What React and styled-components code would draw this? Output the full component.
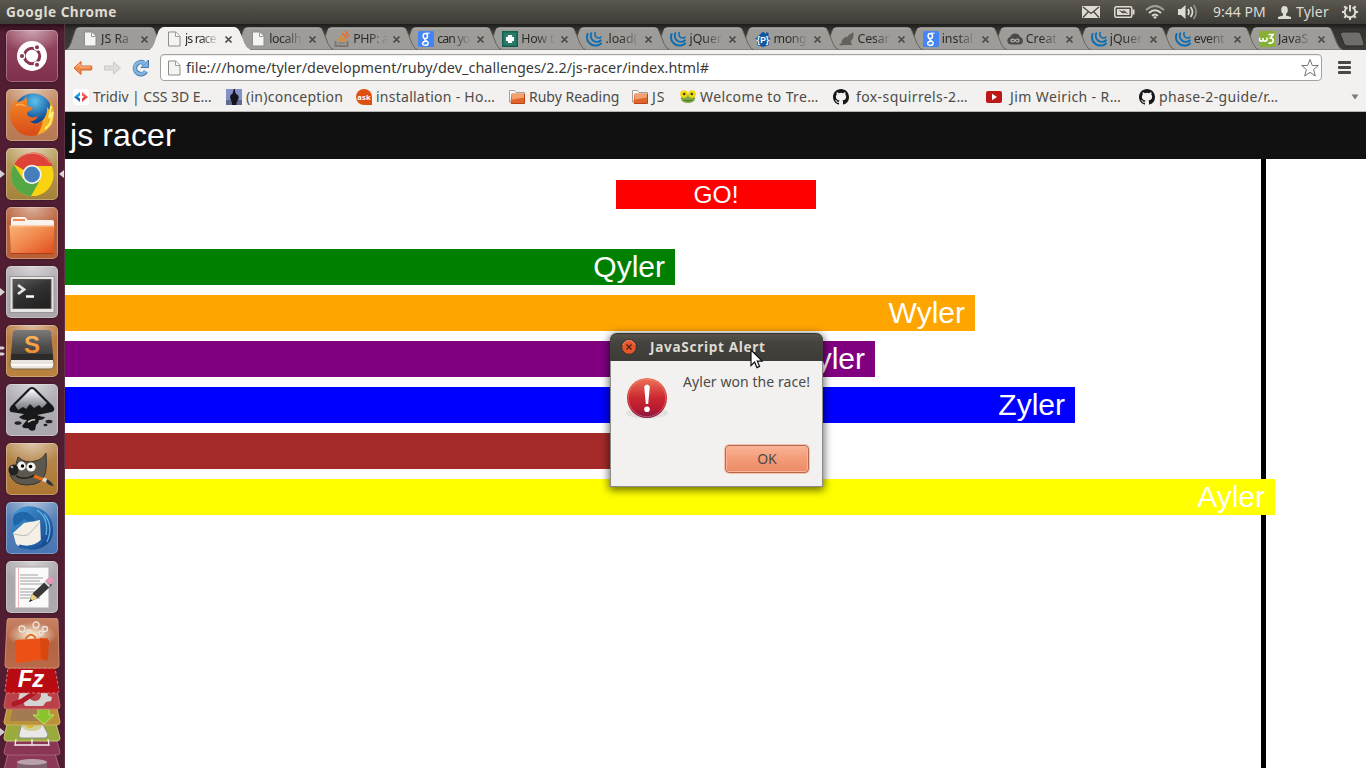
import React from "react";
import styled, { createGlobalStyle } from "styled-components";

const ui = `"Noto Sans", "Open Sans", sans-serif`;
const arial = `"Liberation Sans", Arial, sans-serif`;

const GlobalStyle = createGlobalStyle`
  body { margin: 0; overflow: hidden; background: #fff; }
  * { box-sizing: border-box; }
  svg { display: block; flex: none; }
`;

const Desktop = styled.div`
  position: relative;
  width: 1366px;
  height: 768px;
  overflow: hidden;
  display: flex;
  flex-direction: column;
  font-family: ${ui};
`;

/* ---------- top panel ---------- */
const Panel = styled.header`
  height: 24px;
  flex: none;
  display: flex;
  align-items: center;
  justify-content: space-between;
  padding: 0 8px 0 6px;
  background: linear-gradient(#5b594f 0, #514f47 30%, #3d3c38 100%);
  color: #dfdbd2;
`;
const PanelTitle = styled.span`
  font-size: 13.6px;
  font-weight: 700;
  line-height: 24px;
  letter-spacing: ${(p) => p.$ls || 0}px;
`;
const Indicators = styled.div`
  display: flex;
  align-items: center;
  height: 24px;
`;
const Indicator = styled.div`
  display: flex;
  align-items: center;
  width: ${(p) => p.$w}px;
  font-size: 14px;
  line-height: 24px;
  white-space: nowrap;
  letter-spacing: ${(p) => p.$ls || 0}px;
`;

const Workspace = styled.div`
  flex: 1;
  min-height: 0;
  display: flex;
`;

/* ---------- launcher ---------- */
const Launcher = styled.nav`
  width: 65px;
  flex: none;
  display: flex;
  flex-direction: column;
  background: linear-gradient(#2b0f1b 0, #511d33 8px, #501d32 100%);
  border-right: 1px solid #5c3446;
  padding-top: 6px;
`;
const LauncherRow = styled.div`
  height: 59px;
  flex: none;
  display: grid;
  grid-template-columns: 6px 52px 6px;
  align-items: start;
`;
const Marks = styled.div`
  height: 52px;
  display: flex;
  flex-direction: column;
  justify-content: center;
  align-items: ${(p) => (p.$right ? "flex-end" : "flex-start")};
  gap: 2px;
`;
const Tile = styled.div`
  width: 52px;
  height: 52px;
  border-radius: 5px;
  overflow: hidden;
  background: radial-gradient(ellipse 60% 45% at 50% 0, rgba(255, 255, 255, 0.5), rgba(255, 255, 255, 0) 100%), ${(p) => p.$bg};
  box-shadow: inset 0 0 0 1px rgba(255, 255, 255, 0.28), 0 0 2px rgba(0, 0, 0, 0.5);
`;
const StackArt = styled.svg`
  margin-top: -2px;
`;

/* ---------- browser ---------- */
const Browser = styled.main`
  flex: 1;
  min-width: 0;
  display: flex;
  flex-direction: column;
`;
const TabStrip = styled.div`
  height: 26px;
  flex: none;
  display: flex;
  align-items: flex-end;
  padding-left: 1px;
  background: linear-gradient(#1d1c1a 0, #353430 6px, #3c3b37 100%);
`;
const TabBox = styled.div`
  position: relative;
  z-index: ${(p) => p.$z};
  width: 84.07px;
  flex: none;
  height: 24px;
`;
const TabShape = styled.svg`
  position: absolute;
  left: 0;
  top: 0;
`;
const TabContent = styled.div`
  position: relative;
  display: flex;
  align-items: center;
  height: 24px;
  padding: 2px 0 0 16px;
`;
const TabLabel = styled.span`
  width: 34px;
  margin-left: 3px;
  margin-right: 5px;
  white-space: nowrap;
  font-size: 12.4px;
  letter-spacing: ${(p) => p.$ls || 0}px;
  line-height: 20px;
  color: #2c2a26;
  mask-image: linear-gradient(90deg, #000 45%, rgba(0, 0, 0, 0.1) 95%);
`;
const NewTab = styled.div`
  margin: 0 0 3px 12px;
`;
const Toolbar = styled.div`
  height: 33px;
  flex: none;
  display: flex;
  align-items: center;
  background: #f2f1f0;
  padding: 2px 14px 0 8px;
`;
const NavButtons = styled.div`
  width: 87px;
  display: flex;
  gap: 9px;
`;
const Omnibox = styled.div`
  width: 1162px;
  height: 27px;
  display: flex;
  align-items: center;
  padding: 0 1px 0 5px;
  border: 1px solid #a5a29e;
  border-radius: 4px;
  background: #fff;
  box-shadow: inset 0 1px 1px rgba(0, 0, 0, 0.08);
`;
const Url = styled.span`
  flex: 1;
  margin-left: 4px;
  font-size: 14.4px;
  line-height: 24px;
  letter-spacing: 0.025px;
  color: #3a3936;
  white-space: nowrap;
`;
const MenuButton = styled.div`
  margin-left: 16px;
  width: 13px;
  height: 13px;
  display: flex;
  flex-direction: column;
  justify-content: space-between;
  i { height: 3px; border-radius: 1px; background: #484744; }
`;
const BookmarkBar = styled.div`
  height: 29px;
  flex: none;
  display: flex;
  padding: 0 7px 1px 8px;
  align-items: center;
  background: #f2f1f0;
  border-bottom: 1px solid #b8b6b4;
`;
const Bookmark = styled.div`
  width: ${(p) => p.$w}px;
  flex: none;
  display: flex;
  align-items: center;
  gap: ${(p) => p.$gap || 4}px;
  font-size: 14px;
  letter-spacing: ${(p) => p.$ls || 0}px;
  line-height: 26px;
  color: #4c4b48;
  white-space: nowrap;
`;

/* ---------- page ---------- */
const PageHeader = styled.div`
  height: 47px;
  flex: none;
  padding-left: 5px;
  background: #111;
  color: #fff;
  font: 32px/47px ${arial};
  letter-spacing: 0.1px;
`;
const Track = styled.section`
  width: 1201px;
  flex: 1;
  padding-top: 21px;
  border-right: 5px solid #000;
  font-family: ${arial};
`;
const GoButton = styled.div`
  width: 200px;
  height: 29px;
  margin: 0 0 40px 551px;
  background: red;
  color: #fff;
  text-align: center;
  font-size: 24.5px;
  line-height: 29px;
`;
const Lane = styled.div`
  width: ${(p) => p.$w}px;
  height: 36px;
  margin-bottom: 10px;
  padding-right: 10px;
  position: relative;
  background: ${(p) => p.$c};
  color: #fff;
  text-align: right;
  font-size: 30px;
  line-height: 36px;
`;

/* ---------- dialog ---------- */
const Dialog = styled.div`
  position: absolute;
  z-index: 50;
  left: 610px;
  top: 333px;
  width: 213px;
  height: 154px;
  display: flex;
  flex-direction: column;
  background: #f2f1f0;
  border: 1px solid #8d8c89;
  border-top: 0;
  border-radius: 7px 7px 0 0;
  box-shadow: 0 2px 8px 1px rgba(0, 0, 0, 0.6);
`;
const TitleBar = styled.div`
  height: 28px;
  flex: none;
  display: flex;
  align-items: center;
  margin: 0 -1px;
  padding: 0 0 1px 11px;
  gap: 13px;
  border-radius: 7px 7px 0 0;
  border-top: 1px solid #33322e;
  background: linear-gradient(#55534b 0, #45443f 30%, #3c3b37 100%);
  color: #dfdbd2;
`;
const DialogBody = styled.div`
  display: flex;
  padding: 10px 0 0 14px;
  height: 84px;
`;
const Message = styled.span`
  margin-left: 14px;
  font-size: 14px;
  line-height: 22px;
  letter-spacing: 0.07px;
  color: #4c4b48;
  white-space: nowrap;
`;
const OkButton = styled.button`
  align-self: flex-end;
  width: 84px;
  height: 28px;
  margin: 0 13px 0 0;
  padding: 0;
  border: 1px solid #b5684a;
  border-radius: 4px;
  background: linear-gradient(#fab396 0, #f39b78 50%, #ee8b66 100%);
  box-shadow: 0 0 0 1px #f4c3b0, inset 0 0 0 1px #f8b79d;
  color: #4c4b48;
  font: 14px/26px ${ui};
`;
const Cursor = styled.svg`
  position: absolute;
  z-index: 60;
  left: 750px;
  top: 349px;
`;

/* ---------- small icons ---------- */
const S = ({ children, w = 16, h = w, ...r }) => (
  <svg width={w} height={h} viewBox={`0 0 ${w} ${h}`} {...r}>{children}</svg>
);

const PageIcon = () => (
  <S>
    <path d="M2.500 1h7.200L14 5.300V15H2.500z" fill="#f4f4f3" stroke="#8e8d8a" />
    <path d="M9.500 1.200v4.300h4.300" fill="#fff" stroke="#9b9a97" />
  </S>
);
const StackIcon = () => (
  <S>
    <path d="M1.500 10v5h12v-5" fill="none" stroke="#7b7772" strokeWidth="2" />
    <path d="M4 12h7" stroke="#8b8579" strokeWidth="1.800" />
    <path d="M4 8.700l7 1.300M5 5.600l6.500 2.800" stroke="#e08a28" strokeWidth="1.700" />
    <path d="M8 2l5 5M12 0l2.600 6" stroke="#ee6a20" strokeWidth="1.700" />
  </S>
);
const GoogleIcon = () => (
  <S>
    <rect width="16" height="16" rx="1.500" fill="#4484f3" />
    <g fill="none" stroke="#fff">
      <ellipse cx="7.300" cy="5" rx="2.200" ry="2.600" strokeWidth="1.500" />
      <path d="M8 2.200h3.600" strokeWidth="1.100" />
      <path d="M7.500 7.500q-1.700 1.100 0 2 2.700 1 2.700 2.600Q10 14.300 7.300 14.300 4.500 14.200 4.600 12.200 5 10.300 8 10.200" strokeWidth="1.400" />
    </g>
  </S>
);
const PlusIcon = () => (
  <S>
    <rect width="16" height="16" fill="#14604f" />
    <rect x="1.500" y="1.500" width="13" height="13" fill="#287a69" />
    <path d="M8 4v8M4 8h8" stroke="#fff" strokeWidth="4.200" />
  </S>
);
const JqueryIcon = () => (
  <S>
    <g fill="none" stroke="#0b6eb4" strokeLinecap="round">
      <path d="M1.600 3C-.6 9 4 15.500 11 14.400c1.800-.3 3-1.100 4-2" strokeWidth="2" />
      <path d="M5.300 2.200C3.400 7 7 11.600 12 10.800c1.300-.2 2.200-.8 3-1.500" strokeWidth="1.800" />
      <path d="M9.200 1.500C8 4.600 10.200 7.300 13 7c.8-.1 1.400-.4 2-.9" strokeWidth="1.500" />
    </g>
  </S>
);
const HouseIcon = () => (
  <S>
    <path d="M0 8L8 .5l3 2.600V1.500h2.500v4L16 8l-2 .6V14L8 16l-6-2V8.600z" fill="#12569d" />
    <text x="8" y="12" textAnchor="middle" fontFamily="Liberation Sans" fontWeight="700" fontSize="8.500" fill="#fff">{"{P}"}</text>
  </S>
);
const CatIcon = () => (
  <S>
    <path d="M0 14c0-1 2-1.200 2.500-2C3 8 5.500 6 9 5.600L10 3.500 12 3l2-2 .7 2.600L14 6.500c0 1.500-1 2.500-2 3-.3 1.500.3 3 1.300 4.500H5c-2 .6-4 .6-5 0z" fill="#65625e" />
  </S>
);
const CloudIcon = () => (
  <S>
    <path d="M3.500 13.500a3.800 3.800 0 0 1-.5-7.400 5.500 5.500 0 0 1 10.200-.2 3.900 3.900 0 0 1-.7 7.600z" fill="#4b4a49" />
    <path d="M8 9.500C6.500 7.500 4 7.600 4 9.500s2.500 2 4 0 4-2 4 0-2.500 2-4 0z" fill="none" stroke="#b9b8b5" strokeWidth="1.200" />
  </S>
);
const W3Icon = () => (
  <S>
    <rect width="16" height="16" fill="#86b135" />
    <path d="M.5 6.500v2.500q1.500 2.500 3.500 0V7v2q2 2.500 4 0V6.500" fill="none" stroke="#fff" strokeWidth="1.600" />
    <path d="M9.500 3.500h4.500l-2.500 3.500q3 .2 2.700 2.800-.6 3-4.700 2" fill="none" stroke="#fff" strokeWidth="1.700" />
  </S>
);
const TridivIcon = () => (
  <S>
    <rect width="16" height="16" rx="3" fill="#fff" />
    <path d="M7 3v3.500L5 8H1z" fill="#17a0ee" /><path d="M1 8h4l2 1.500V13z" fill="#1764c0" />
    <path d="M9 3v3.500L11 8h4z" fill="#fb5a4c" /><path d="M15 8h-4L9 9.500V13z" fill="#e23c48" />
  </S>
);
const FigureIcon = () => (
  <S>
    <rect width="16" height="16" fill="#8391c6" />
    <path d="M0 11h16v5H0z" fill="#626a91" />
    <path d="M8 0h1v2.500l1 2.500q3 1 2.700 4L10.500 14v2H6v-2L4 8.500q0-3 2.700-4L7 2.500z" fill="#15131c" />
  </S>
);
const AskIcon = () => (
  <S>
    <circle cx="8" cy="8" r="8" fill="#de4f10" />
    <path d="M9 9h7v7H9z" fill="#de4f10" />
    <text x="8" y="10.500" textAnchor="middle" fontFamily="Noto Sans" fontWeight="700" fontSize="7.500" fill="#fff">ask</text>
  </S>
);
const FolderIcon = () => (
  <S>
    <path d="M.5 13V1.500h5l1.500 2h8.500V13z" fill="#fff" stroke="#a5a09c" />
    <path d="M2.500 4.500h13v9.500h-14z" fill="#df672b" />
    <path d="M3 5h12v3.500l-12 2z" fill="#f2a16f" />
    <path d="M2 14.500h13.500V5" fill="none" stroke="#bd4317" />
  </S>
);
const FrogIcon = () => (
  <S>
    <ellipse cx="8" cy="9.500" rx="7.200" ry="4.500" fill="#7fa943" />
    <path d="M3.500 11q4.500 2 9 0" fill="none" stroke="#4c7128" />
    <circle cx="4" cy="5" r="3.800" fill="#f3d90d" /><circle cx="12" cy="5" r="3.800" fill="#f3d90d" />
    <circle cx="4.200" cy="5" r="1.300" fill="#343e1e" /><circle cx="11.800" cy="5" r="1.300" fill="#343e1e" />
  </S>
);
const GithubIcon = () => (
  <S>
    <path fill="#171717" d="M8 0C3.580 0 0 3.580 0 8c0 3.540 2.290 6.530 5.470 7.590.4.070.55-.17.55-.38 0-.19-.01-.82-.01-1.490-2.010.37-2.530-.49-2.690-.94-.09-.23-.48-.94-.82-1.130-.28-.15-.68-.52-.01-.53.63-.01 1.080.58 1.230.82.72 1.210 1.870.87 2.330.66.07-.52.28-.87.51-1.070-1.780-.2-3.640-.89-3.640-3.950 0-.87.31-1.590.82-2.150-.08-.2-.36-1.020.08-2.120 0 0 .67-.21 2.200.82a7.600 7.600 0 0 1 4 0c1.530-1.040 2.200-.82 2.200-.82.44 1.100.16 1.920.08 2.120.51.56.82 1.270.82 2.150 0 3.070-1.870 3.750-3.650 3.950.29.25.54.73.54 1.480 0 1.070-.01 1.930-.01 2.200 0 .21.15.46.55.38A8.010 8.010 0 0 0 16 8c0-4.420-3.580-8-8-8z" />
  </S>
);
const TubeIcon = () => (
  <S>
    <rect y="2" width="16" height="12" rx="2" fill="#bd1717" />
    <path d="M6 4.800v6.400L11 8z" fill="#fff" />
  </S>
);

const BackIcon = ({ off }) => (
  <S w={20}>
    <path
      d={off ? "M18.500 10l-7-6v4h-9v4h9v4z" : "M1 10l7-6.500V8h10q.8 0 .8 1v2q0 1-.8 1H8v4.500z"}
      fill={off ? "#deddda" : "#f08a45"}
      stroke={off ? "#cbc9c6" : "#ce6429"}
      strokeLinejoin="round"
    />
    {!off && <path d="M2.800 9.800l4.200-4V9h10" fill="none" stroke="#fbc08f" />}
  </S>
);
const ReloadIcon = () => (
  <S w={20}>
    <path d="M13 5A6 6 0 1 0 15 13.500" fill="none" stroke="#4079ad" strokeWidth="4.600" />
    <path d="M17.500 2v7.500H10z" fill="#7fb1de" stroke="#4079ad" strokeLinejoin="round" />
    <path d="M13.200 5.200A6 6 0 1 0 14.800 13.200" fill="none" stroke="#83b5e2" strokeWidth="2.900" />
  </S>
);

/* ---------- launcher drawings ---------- */
const L = ({ children }) => <svg width="52" height="52" viewBox="0 0 52 52">{children}</svg>;

const Dash = () => (
  <L>
    <circle cx="26" cy="26" r="15" fill="#fff" />
    <circle cx="26" cy="26" r="7.700" fill="none" stroke="#893850" strokeWidth="3" />
    <g stroke="#fff" strokeWidth="1.300">
      <circle cx="16" cy="26" r="2.700" fill="#893850" />
      <circle cx="31" cy="17.300" r="2.700" fill="#893850" />
      <circle cx="31" cy="34.700" r="2.700" fill="#893850" />
    </g>
  </L>
);
const Firefox = () => (
  <L>
    <defs>
      <radialGradient id="ffb" cx=".55" cy=".2"><stop offset="0" stopColor="#5cc3ee" /><stop offset="1" stopColor="#104a93" /></radialGradient>
      <linearGradient id="ffo" x2="0" y2="1"><stop offset="0" stopColor="#f58b27" /><stop offset="1" stopColor="#d84a17" /></linearGradient>
    </defs>
    <circle cx="27" cy="24" r="19.500" fill="url(#ffb)" />
    <path d="M44 12c6 9 6 22-3 29-8 7-20 7-28 1l6-8c8 3 16 1 20-6 2-4 2-6 2-10l4 5z" fill="#f6b021" />
    <path d="M45 17l-2 12 4-6-3 12-5 5" fill="none" stroke="#fff27a" strokeWidth="1.800" />
    <path d="M8 12c1-1 2 0 3 1 4-1 7-1 9-5 2 4 0 7 2 9l5 2c-1 3-5 3-6 5 0 4 6 6 10 3 1 2-3 6-7 5 4 4 9 3 13-1-1 6-2 9-6 15-6 2-16 1-21-6C4 34 3 26 5 20z" fill="url(#ffo)" />
    <path d="M10 16q5-2 9 1" fill="none" stroke="#fbab52" strokeWidth="1.500" />
  </L>
);
const Chrome = () => (
  <L>
    <circle cx="26" cy="27" r="21" fill="#fbd311" />
    <path d="M26 27L8 16.200A21 21 0 0 1 46.500 18H26z" fill="#dd4437" />
    <path d="M7.800 16.500A21 21 0 0 0 25 48l9.500-16L17 31z" fill="#55a746" />
    <path d="M26 18h19.500a21 21 0 0 1-20 30L34 32z" fill="#fbd210" />
    <circle cx="26" cy="26.500" r="9.700" fill="#f5f3ed" />
    <circle cx="26" cy="26.500" r="7.900" fill="#447fbb" />
    <path d="M8 16a21 21 0 0 1 36-1" fill="none" stroke="#ef9285" />
  </L>
);
const Files = () => (
  <L>
    <defs><linearGradient id="fo" x2="1" y2="1"><stop offset="0" stopColor="#f9b377" /><stop offset=".45" stopColor="#f18a4e" /><stop offset="1" stopColor="#e04b1c" /></linearGradient></defs>
    <path d="M5 21V12q0-2 2-2h12l3 3h24q2 0 2 2v6z" fill="#f8f3ee" />
    <path d="M7 13h12" stroke="#f08850" strokeWidth="2" />
    <path d="M3.500 18.500h45L47 47H5z" fill="url(#fo)" />
    <path d="M4 19h44" stroke="#ffd0a1" />
    <path d="M5 46.500h42" stroke="#b73a17" />
  </L>
);
const Terminal = () => (
  <L>
    <defs><linearGradient id="te" x2=".6" y2="1"><stop offset="0" stopColor="#5d5c5b" /><stop offset=".5" stopColor="#333232" /><stop offset="1" stopColor="#242322" /></linearGradient></defs>
    <rect x="4" y="10.500" width="44" height="36" fill="#e7e6e4" stroke="#989695" />
    <rect x="7" y="13.500" width="38" height="29" fill="url(#te)" stroke="#555" />
    <path d="M12 19l6 4.500-6 4.500" fill="none" stroke="#e4e4e3" strokeWidth="2.800" />
    <path d="M20 30.500h8" stroke="#fff" strokeWidth="2.400" />
  </L>
);
const Sublime = () => (
  <L>
    <defs>
      <linearGradient id="sub" x2="0" y2="1"><stop offset="0" stopColor="#7b7a79" /><stop offset=".6" stopColor="#4b4a49" /><stop offset="1" stopColor="#3a3938" /></linearGradient>
      <linearGradient id="subs" x2="0" y2="1"><stop offset="0" stopColor="#ffbf6b" /><stop offset="1" stopColor="#ef8420" /></linearGradient>
    </defs>
    <path d="M8 9h36l4 30q0 5-4 5H8q-4 0-4-5z" fill="#e9e5de" stroke="#79623f" />
    <path d="M10 5h32q3 0 3.300 3L47 34H5L6.700 8Q7 5 10 5z" fill="url(#sub)" />
    <path d="M5.300 29h41.400L47 35H5z" fill="#2c2b2a" />
    <text x="26" y="27.500" textAnchor="middle" fontFamily="Liberation Sans" fontWeight="700" fontSize="24" fill="url(#subs)">S</text>
    <path d="M5 40h42" stroke="#fff" strokeWidth="1.500" />
  </L>
);
const Inkscape = () => (
  <L>
    <defs><linearGradient id="ink" x2="0" y2="1"><stop offset="0" stopColor="#fff" /><stop offset="1" stopColor="#6d717a" /></linearGradient></defs>
    <path d="M22 5q4-4 8 0l17 17q3 4-1 6l-15 3q4 2 8 2-1 3-6 3 0 3-3 5l-1 5q-5 2-7-2-5 1-6-2l5-6q-5 0-8-3 4-2 5-3L5 28q-3-2 0-6z" fill="#17181a" />
    <path d="M24 6q2-2 4 0l13 13-5 5-3-3-5 3-4-4-4 5-3-2-5 3L9 21z" fill="url(#ink)" />
    <path d="M22 38q5-3 7-2" stroke="#ccc" fill="none" strokeWidth="1.500" />
    <ellipse cx="12" cy="39" rx="3.500" ry="1.800" fill="#202124" /><ellipse cx="43" cy="37.500" rx="3.500" ry="1.800" fill="#202124" />
    <ellipse cx="39.500" cy="41" rx="2" ry="1.200" fill="#202124" />
  </L>
);
const Gimp = () => (
  <L>
    <path d="M12 14q8 7 17 4 7-1 11-8 1 15-1 21-3 11-18 11-13 0-17-10 5-5 8-18z" fill="#5d584e" stroke="#37332d" />
    <circle cx="15.500" cy="23" r="4.400" fill="#f4f4ef" /><circle cx="25" cy="24" r="4.600" fill="#f4f4ef" />
    <circle cx="16.500" cy="23" r="1.700" /><circle cx="24.500" cy="23.500" r="1.800" />
    <ellipse cx="7.500" cy="27" rx="5" ry="5.500" fill="#202223" /><circle cx="6" cy="24" r="1.300" fill="#aaa" />
    <path d="M10 33q9 5 19-1" stroke="#221f1c" fill="none" strokeWidth="1.500" />
    <path d="M28 33l10 4" stroke="#df6c19" strokeWidth="3.500" />
    <path d="M37 36l4 2" stroke="#ddd" strokeWidth="4" />
    <path d="M41 36q4 2 7 7-5 0-8-4z" fill="#303638" />
  </L>
);
const Thunderbird = () => (
  <L>
    <defs><linearGradient id="tb" x2="1" y2="1"><stop offset="0" stopColor="#489dd8" /><stop offset="1" stopColor="#103d85" /></linearGradient></defs>
    <path d="M8 11q9-9 21-6 16 4 18 21 1 14-10 19-12 6-22-1Q4 36 5 25z" fill="url(#tb)" />
    <path d="M7 31L18 21l16-3 1 24-21 3-4-3z" fill="#f4f0e7" />
    <path d="M8 32q12 3 15 0l11-12" fill="none" stroke="#bdb9ae" />
    <path d="M8 13q10-7 18 1l4 5q-8 1-12-2-4 5-10 7-2-6 0-11z" fill="#1e66a8" />
    <path d="M31 8q12 8 9 25M38 12q10 12 3 28" fill="none" stroke="#63b3e3" strokeWidth="1.300" />
    <path d="M13 44q14 4 24-6" fill="none" stroke="#1f5da5" strokeWidth="3" />
  </L>
);
const Editor = () => (
  <L>
    <path d="M9 6h34v41H9z" fill="#fafafa" stroke="#aaa" />
    <path d="M14 14h18M14 17h23M14 20h20M14 23h23M14 28h15M14 31h18M14 34h13M14 37h20" stroke="#a1a1a1" strokeWidth="1" />
    <path d="M12.500 6v41" stroke="#f0b6b6" />
    <path d="M23 41l4-9 14-13 5 5-14 13z" fill="#393837" />
    <path d="M23 41l3.500-8 5 4z" fill="#ead07e" /><path d="M23 41l1.500-3 2 1.600z" fill="#222" />
    <path d="M39 20l3-3q4-2 6 2l-4 5z" fill="#e896bb" /><path d="M38.500 20.500l5 5" stroke="#ddd" strokeWidth="1.800" />
  </L>
);

const Stack = () => (
  <StackArt width="64" height="152" viewBox="0 0 64 152">
    <defs>
      <linearGradient id="bag" x2="0" y2="1"><stop offset="0" stopColor="#c98466" /><stop offset=".5" stopColor="#b36543" /><stop offset="1" stopColor="#b86a49" /></linearGradient>
      <radialGradient id="glow"><stop offset="0" stopColor="#fff5dc" /><stop offset="1" stopColor="#fff5dc" stopOpacity="0" /></radialGradient>
    </defs>
    <path d="M8 136h47l5 16H4z" fill="#8c3a58" stroke="#a86b82" />
    <path d="M17 144h30v8H17z" fill="#80626f" /><ellipse cx="32" cy="144" rx="15" ry="3" fill="#b9a1ae" />
    <path d="M8 120h48l4 14q0 3-3 3H7q-3 0-3-3z" fill="#893654" stroke="#a55c78" />
    <path d="M7 106h49l4 14q0 3-3 3H7q-3 0-3-3z" fill="#9aaa3c" stroke="#c3cc70" />
    <path d="M22 105h20l6 11q0 4-3 4H21q-3 0-2-4z" fill="#e8e9e7" stroke="#8b8e87" />
    <ellipse cx="32" cy="108" rx="10" ry="5" fill="#d0cf96" /><circle cx="30" cy="106" r="4" fill="#d4b72f" />
    <path d="M16 121l-1 6h34l-1-6M32 121v6" stroke="#f7eef1" fill="none" strokeWidth="1.300" />
    <path d="M7 90h50l3 14q0 3-3 3H7q-3 0-3-3z" fill="#b9923a" stroke="#ceb05f" />
    <path d="M13 90h29v13H10z" fill="#a47a50" />
    <path d="M38 91h11v6h5L44 106 33 97h5z" fill="#8bc32f" stroke="#bbdf65" />
    <path d="M7 72h50l3 16q0 3-3 3H7q-3 0-3-3z" fill="#bb4149" stroke="#cd6a6e" />
    <path d="M20 74h27l1 4 4 1-1 4-5 1-3 4H25l-2-4-5-1z" fill="#d4d5d3" /><circle cx="35" cy="77" r="6" fill="#bb4149" />
    <path d="M14 86l8-3 12-8" stroke="#b11826" strokeWidth="5" strokeLinecap="round" fill="none" />
    <path d="M8 50h47l4 22q0 3-3 3H8q-3 0-3-3z" fill="#b90c12" stroke="#d9797b" strokeDasharray="3 2" />
    <text x="31" y="69" textAnchor="middle" fontFamily="Liberation Sans" fontWeight="700" fontStyle="italic" fontSize="24" fill="#fff">Fz</text>
    <path d="M10 0h45q3 0 3 3l1 44q0 3-3 3H8q-3 0-3-3L7 3q0-3 3-3z" fill="url(#bag)" stroke="#c98d70" />
    <ellipse cx="32" cy="17" rx="24" ry="13" fill="url(#glow)" />
    <g fill="none" stroke="#ece5de" strokeWidth="1.300"><circle cx="22" cy="11" r="3" /><circle cx="36" cy="7" r="3" /><circle cx="45" cy="11" r="2.500" /><circle cx="29" cy="14" r="2" /><circle cx="41" cy="15" r="2" /></g>
    <path d="M15 22l33-2-2 21-30 4z" fill="#ed5014" /><path d="M40 20l9 2-1 21-7-2z" fill="#d8470f" />
    <path d="M26 23v-3q5-6 9-1v3" fill="none" stroke="#e16829" strokeWidth="1.800" />
    <path d="M0 110l5 4-5 4z" fill="#d3c9cd" />
  </StackArt>
);

const APPS = [
  { Icon: Dash, bg: "linear-gradient(#9a4d66, #7d2e4b)" },
  { Icon: Firefox, bg: "linear-gradient(#c48a62, #b87952)" },
  { Icon: Chrome, bg: "linear-gradient(#bca062, #a58239)", left: 1, right: 1 },
  { Icon: Files, bg: "linear-gradient(#b9643e, #b76038)" },
  { Icon: Terminal, bg: "linear-gradient(#b3adb3, #aaa5ab)", left: 1 },
  { Icon: Sublime, bg: "linear-gradient(#b8793f, #b9823e)", left: 2 },
  { Icon: Inkscape, bg: "linear-gradient(#b0adb5, #aaa7af)" },
  { Icon: Gimp, bg: "linear-gradient(#b98c54, #ad7530)" },
  { Icon: Thunderbird, bg: "linear-gradient(#5d86b8, #4875b3)" },
  { Icon: Editor, bg: "linear-gradient(#aaa5a9, #aeaaad)" },
];

const TABS = [
  [PageIcon, "JS Ra", 0], [PageIcon, "js race", -0.9], [PageIcon, "localh", -0.4], [StackIcon, "PHP: a", -0.4],
  [GoogleIcon, "can yo", -0.9], [PlusIcon, "How t", -0.2], [JqueryIcon, ".load(", -0.1], [JqueryIcon, "jQuer", 0],
  [HouseIcon, "mong", -0.4], [CatIcon, "Cesar", -0.2], [GoogleIcon, "instal", 0], [CloudIcon, "Creat", 0],
  [JqueryIcon, "jQuer", 0], [JqueryIcon, "event", -0.4], [W3Icon, "JavaS", 0],
];

const BOOKMARKS = [
  { Icon: TridivIcon, text: "Tridiv | CSS 3D E…", w: 153, ls: -0.05 },
  { Icon: FigureIcon, text: "(in)conception", w: 130, ls: 0.26 },
  { Icon: AskIcon, text: "installation - Ho…", w: 153, ls: 0.25 },
  { Icon: FolderIcon, text: "Ruby Reading", w: 123, ls: 0 },
  { Icon: FolderIcon, text: "JS", w: 48, ls: 1 },
  { Icon: FrogIcon, text: "Welcome to Tre…", w: 153, ls: 0.4 },
  { Icon: GithubIcon, text: "fox-squirrels-2…", w: 153, gap: 7, ls: 0.4 },
  { Icon: TubeIcon, text: "Jim Weirich - R…", w: 153, gap: 8, ls: 0.4 },
  { Icon: GithubIcon, text: "phase-2-guide/r…", w: 153, ls: 0.35 },
];

const RACERS = [
  ["Qyler", "green", 610], ["Wyler", "orange", 910], ["Tyler", "purple", 810],
  ["Zyler", "blue", 1010], ["", "brown", 610], ["Ayler", "yellow", 1210],
];

function Tab({ Icon, label, ls, active, z }) {
  return (
    <TabBox $z={z}>
      <TabShape width="101" height="24" viewBox="0 0 101 24">
        <path
          d="M0 24Q3 22.500 5 17L9 5Q10.500 1.500 14 1.500H84Q87.500 1.500 89 5L94 17.500Q96.500 23 100 24Z"
          fill={active ? "#f2f1f0" : "#9d9c99"}
          stroke={active ? "#f8f7f6" : "#66645f"}
          strokeWidth="1"
        />
        {!active && <path d="M10 3.500Q11.500 2 14 2H84Q87 2 88 3.500" fill="none" stroke="#b6b5b2" />}
      </TabShape>
      <TabContent>
        <Icon />
        <TabLabel $ls={ls}>{label}</TabLabel>
        <S w={9}>
          <path d="M1.500 1.500l6 6M7.500 1.500l-6 6" stroke="#4b4946" strokeWidth="1.700" />
        </S>
      </TabContent>
    </TabBox>
  );
}

function StatusArea() {
  return (
    <Indicators>
      <Indicator $w={32}>
        <S w={18} h={12}>
          <rect width="18" height="12" fill="#dfdbd2" />
          <path d="M1 1l8 6.500L17 1M1 11.500l5.500-6M17 11.500l-5.500-6" fill="none" stroke="#48463f" strokeWidth="1.300" />
        </S>
      </Indicator>
      <Indicator $w={31}>
        <S w={21} h={12}>
          <rect x=".8" y=".8" width="17" height="10.400" rx="1.500" fill="none" stroke="#dfdbd2" strokeWidth="1.500" />
          <path d="M19.500 3.500v5" stroke="#dfdbd2" strokeWidth="2" />
          <rect x="3" y="3" width="12.500" height="6" fill="#dfdbd2" />
          <path d="M4.500 4l5 1.500V4l5 4-5-1.500V8z" fill="#454440" />
        </S>
      </Indicator>
      <Indicator $w={33}>
        <S w={20} h={14}>
          <g fill="none" strokeWidth="1.900">
            <path d="M1 5q9-8 18 0" stroke="#a29f96" />
            <path d="M4 8q6-5.500 12 0" stroke="#dfdbd2" /><path d="M7 10.800q3-2.500 6 0" stroke="#dfdbd2" />
          </g>
          <path d="M8 12q2-1.500 4 0l-2 2z" fill="#dfdbd2" />
        </S>
      </Indicator>
      <Indicator $w={35}>
        <S w={20} h={16}>
          <path d="M0 5h3l4.500-4v14L3 11H0z" fill="#dfdbd2" />
          <path d="M10 5q2 3 0 6M12.500 3q4 5 0 10" fill="none" stroke="#dfdbd2" strokeWidth="1.700" />
          <path d="M15.500 1q5.500 7 0 14" fill="none" stroke="#918e85" strokeWidth="1.700" />
        </S>
      </Indicator>
      <Indicator $w={65} $ls={0}>9:44 PM</Indicator>
      <Indicator $w={18}>
        <S w={13} h={13}>
          <ellipse cx="6.500" cy="4" rx="3.300" ry="4" fill="#dfdbd2" />
          <path d="M5 6h3v3.500l5 1.500v2H0v-2l5-1.500z" fill="#dfdbd2" />
        </S>
      </Indicator>
      <Indicator $w={46} $ls={0.2}>Tyler</Indicator>
      <Indicator $w={16}>
        <S w={16}>
          <g stroke="#dfdbd2" fill="none">
            <path d="M5.500 3.300a5.300 5.300 0 1 0 5 0" strokeWidth="2" />
            <path d="M8 1v6.500" strokeWidth="2" />
            <path d="M2.300 2.300l2 2M13.700 2.300l-2 2M0 8h3M13 8h3M2.300 13.700l2-2M13.700 13.700l-2-2M8 13v3" strokeWidth="2.200" />
          </g>
        </S>
      </Indicator>
    </Indicators>
  );
}

function AlertDialog() {
  return (
    <Dialog>
      <TitleBar>
        <S w={16}>
          <circle cx="8" cy="8" r="7.400" fill="#e6552b" stroke="#33302b" />
          <path d="M2 6a6.300 6.300 0 0 1 12 0" fill="none" stroke="#f3906c" />
          <path d="M5.500 5.500l5 5M10.500 5.500l-5 5" stroke="#4b2517" strokeWidth="1.300" />
        </S>
        <PanelTitle $ls={0.68}>JavaScript Alert</PanelTitle>
      </TitleBar>
      <DialogBody>
        <svg width="44" height="52" viewBox="0 0 44 52">
          <defs>
            <linearGradient id="err" x2="0" y2="1"><stop offset="0" stopColor="#ee7358" /><stop offset=".5" stopColor="#cb2730" /><stop offset=".78" stopColor="#b71b30" /><stop offset="1" stopColor="#7c184c" /></linearGradient>
          </defs>
          <ellipse cx="22" cy="42" rx="21" ry="5.500" fill="#e2e1df" />
          <circle cx="22" cy="27" r="20" fill="url(#err)" />
          <circle cx="22" cy="27" r="18.700" fill="none" stroke="#ef8f7b" strokeOpacity=".5" />
          <path d="M19.200 15.500q2.800-4 5.600 0L23.200 33h-2.400z" fill="#fff" />
          <circle cx="22" cy="38.300" r="2.800" fill="#fff" />
        </svg>
        <Message>Ayler won the race!</Message>
      </DialogBody>
      <OkButton>OK</OkButton>
    </Dialog>
  );
}

export default function App() {
  return (
    <Desktop>
      <GlobalStyle />
      <Panel>
        <PanelTitle $ls={0.5}>Google Chrome</PanelTitle>
        <StatusArea />
      </Panel>
      <Workspace>
        <Launcher>
          {APPS.map(({ Icon, bg, left = 0, right = 0 }, i) => (
            <LauncherRow key={i}>
              <Marks>
                {Array.from({ length: left }, (_, k) => (
                  <S key={k} w={5} h={left > 1 ? 4 : 8}>
                    <path d={left > 1 ? "M0 .5h3l2 1.500-2 1.500H0z" : "M0 0l5 4-5 4z"} fill="#d8d0d3" />
                  </S>
                ))}
              </Marks>
              <Tile $bg={bg}><Icon /></Tile>
              <Marks $right>
                {right > 0 && <S w={5} h={8}><path d="M5 0L0 4l5 4z" fill="#e1d9dc" /></S>}
              </Marks>
            </LauncherRow>
          ))}
          <Stack />
        </Launcher>
        <Browser>
          <TabStrip>
            {TABS.map(([Icon, label, ls], i) => (
              <Tab key={i} Icon={Icon} label={label} ls={ls} active={i === 1} z={i === 1 ? 30 : 20 - i} />
            ))}
            <NewTab>
              <S w={26} h={16}>
                <path d="M4 1h15q2 0 3 2l3 9q1 3-2 3H8q-2 0-3-2L1.500 3.500Q1 1 4 1z" fill="#6f6d69" stroke="#2a2926" />
              </S>
            </NewTab>
          </TabStrip>
          <Toolbar>
            <NavButtons>
              <BackIcon />
              <BackIcon off />
              <ReloadIcon />
            </NavButtons>
            <Omnibox>
              <PageIcon />
              <Url>file:///home/tyler/development/ruby/dev_challenges/2.2/js-racer/index.html#</Url>
              <S w={20}>
                <path d="M10 1.500l2.300 6h6l-4.700 4 1.700 6.500-5.300-3.700L4.700 18l1.700-6.500-4.700-4h6z" fill="#fff" stroke="#74726f" strokeLinejoin="round" />
              </S>
            </Omnibox>
            <MenuButton><i /><i /><i /></MenuButton>
          </Toolbar>
          <BookmarkBar>
            {BOOKMARKS.map(({ Icon, text, w, gap, ls }) => (
              <Bookmark key={text} $w={w} $gap={gap} $ls={ls}><Icon />{text}</Bookmark>
            ))}
            <S w={8} h={6} style={{ marginLeft: "auto" }}><path d="M.5 .5h7L4 5.500z" fill="#7b7a77" /></S>
          </BookmarkBar>
          <PageHeader>js racer</PageHeader>
          <Track>
            <GoButton>GO!</GoButton>
            {RACERS.map(([name, color, w]) => <Lane key={color} $w={w} $c={color}>{name}</Lane>)}
          </Track>
        </Browser>
      </Workspace>
      <AlertDialog />
      <Cursor width="13" height="20" viewBox="0 0 13 20">
        <path d="M1 1v15.500l3.600-3.400 2.300 5.500 2.700-1.200-2.300-5.200h4.900z" fill="#fff" stroke="#111" strokeWidth="1.200" />
      </Cursor>
    </Desktop>
  );
}
